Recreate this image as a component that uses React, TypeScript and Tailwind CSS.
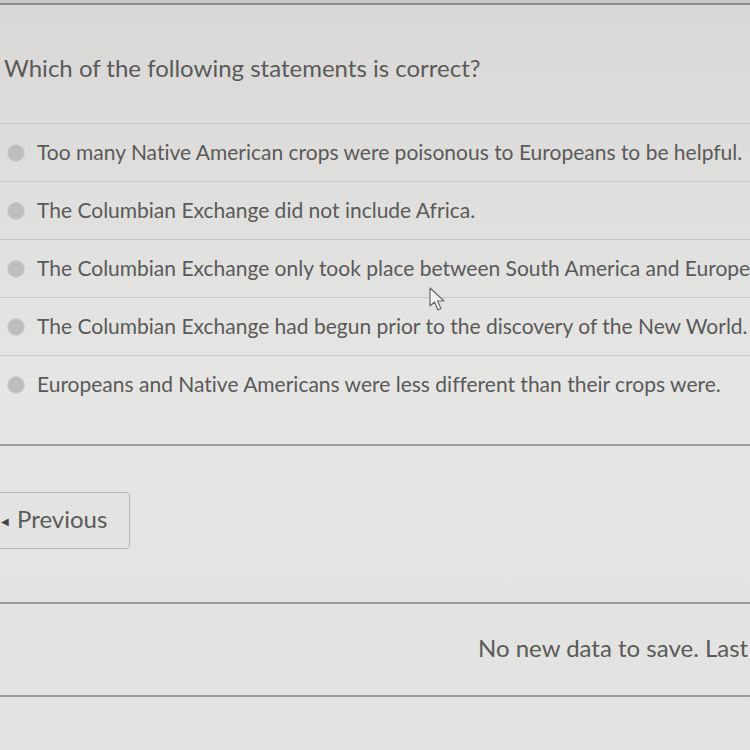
import React from "react";

const options = [
  "Too many Native American crops were poisonous to Europeans to be helpful.",
  "The Columbian Exchange did not include Africa.",
  "The Columbian Exchange only took place between South America and Europe.",
  "The Columbian Exchange had begun prior to the discovery of the New World.",
  "Europeans and Native Americans were less different than their crops were.",
];

export default function App() {
  return (
    <div
      className="relative w-[750px] h-[750px] overflow-hidden bg-gradient-to-b from-[#d9d8d6] via-[#e5e5e3] to-[#e2e2e0] text-[#5a5a5a] [font-variant-ligatures:none]"
      style={{ fontFamily: "Lato, 'Open Sans', sans-serif" }}
    >
      <div className="h-[3px] bg-[#c9c8c6]" />
      <div className="h-[2px] bg-[#8e8d8c]" />
      <div className="h-[118px] pl-[4px] pt-[51px]">
        <div className="text-[24px] leading-[24px] whitespace-nowrap">
          Which of the following statements is correct?
        </div>
      </div>
      <div className="border-t border-[#c8c8c6]">
        {options.map((o, i) => (
          <div
            key={i}
            className={`h-[58px] flex items-center ${i < options.length - 1 ? "border-b border-[#c8c8c6]" : ""}`}
          >
            <div className="ml-[7px] w-[18px] h-[18px] shrink-0 rounded-full bg-[#bebebd] border border-[#d2d2d0]" />
            <div className="ml-[12px] mb-[3px] text-[21px] leading-none whitespace-nowrap">{o}</div>
          </div>
        ))}
      </div>
      <div className="mt-[30px] h-[2px] bg-[#9c9c9b]" />
      <div className="h-[156px] flex flex-col">
        <div className="mt-[46px] ml-[-10px] w-[140px] h-[57px] border border-[#b3b3b1] rounded-[4px] bg-[#e3e3e1] flex items-center">
          <span className="ml-[10px] text-[10px] leading-none text-[#444]">◀</span>
          <span className="ml-[8px] mb-[3px] text-[24px] leading-none">Previous</span>
        </div>
      </div>
      <div className="h-[2px] bg-[#9c9c9b]" />
      <div className="h-[91px] flex items-center pl-[478px]">
        <span className="mb-[3px] text-[24px] leading-none whitespace-nowrap">No new data to save. Last</span>
      </div>
      <div className="h-[2px] bg-[#9c9c9b]" />
      <svg
        className="absolute left-[429px] top-[287px]"
        width="20"
        height="26"
        viewBox="0 0 20 26"
      >
        <path
          d="M1 1 L1 19 L5.5 15 L9 23 L12 21.5 L8.5 14 L15 14 Z"
          fill="#f2f2f0"
          stroke="#6a6a6a"
          strokeWidth="1.2"
          strokeLinejoin="round"
        />
      </svg>
    </div>
  );
}
